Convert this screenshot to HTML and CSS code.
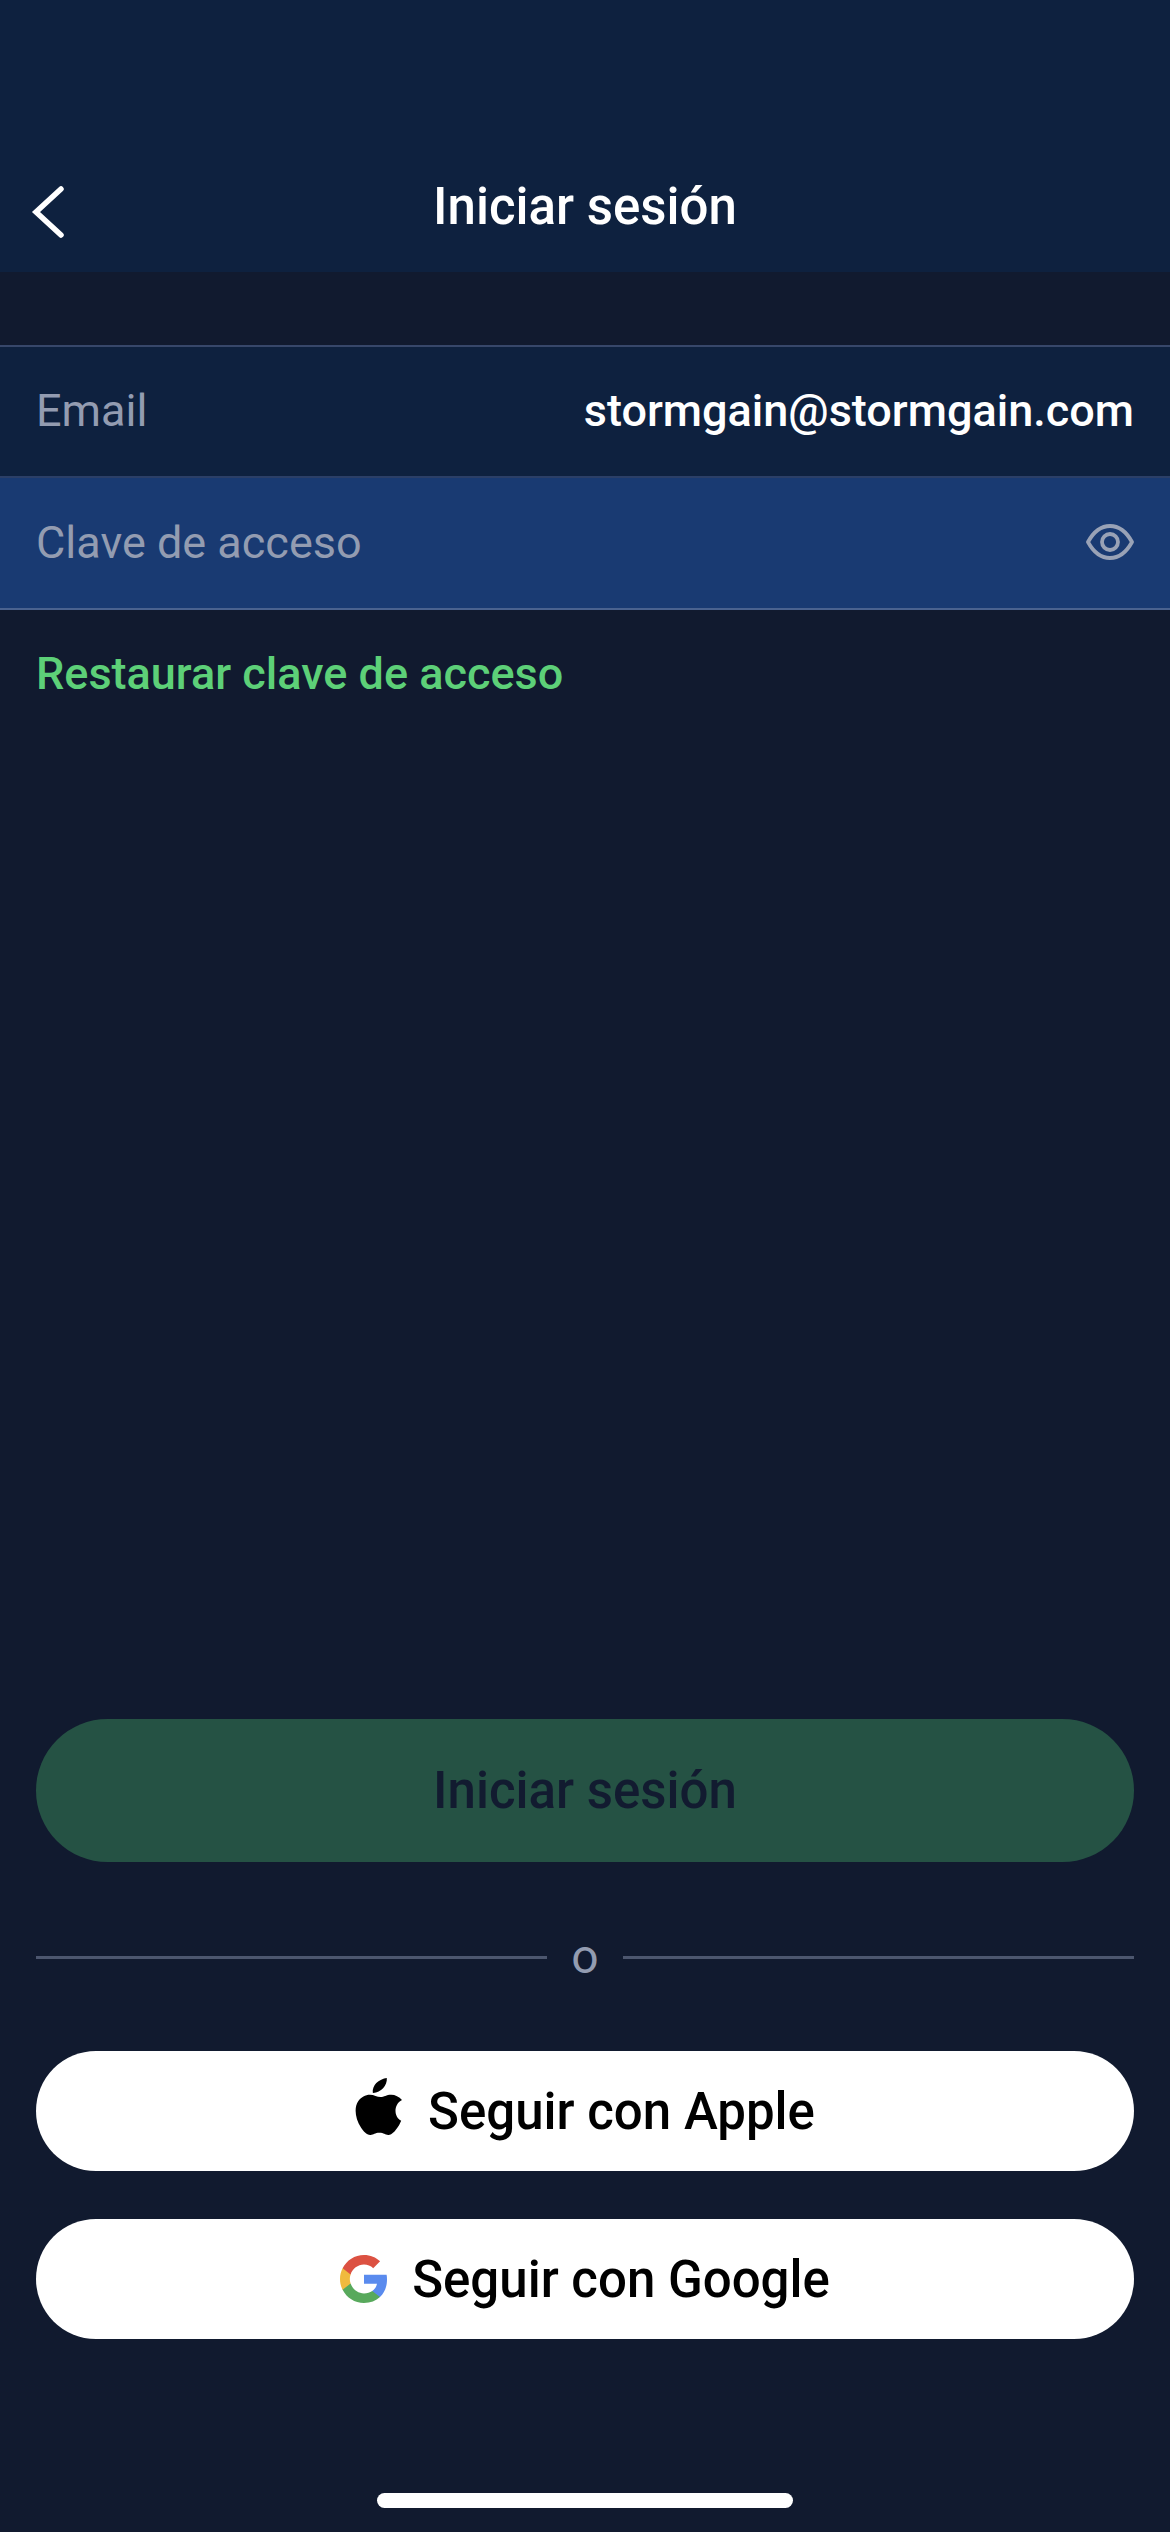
FILE: index.html
```html
<!DOCTYPE html>
<html lang="es">
<head>
    <meta charset="UTF-8">
    <meta name="viewport" content="width=device-width, initial-scale=1.0">
    <title>Iniciar sesión</title>
    <link rel="stylesheet" href="styles.css">
</head>
<body>

    <header class="topbar">
        <svg class="back" width="36" height="52" viewBox="0 0 36 52">
            <path d="M31 3 L6 26 L31 49" fill="none" stroke="#fff" stroke-width="5.5" stroke-linecap="round" stroke-linejoin="miter"/>
        </svg>
        <h1>Iniciar sesión</h1>
    </header>

    <div class="fields">
        <div class="field">
            <span class="label">Email</span>
            <span class="value">stormgain@stormgain.com</span>
        </div>
        <div class="field active">
            <span class="label">Clave de acceso</span>
            <svg class="eye" width="48" height="36" viewBox="0 0 48 36">
                <path d="M2 18 C8 7 15 2 24 2 C33 2 40 7 46 18 C40 29 33 34 24 34 C15 34 8 29 2 18 Z" fill="none" stroke="#99a2b6" stroke-width="3.8" stroke-linejoin="round"/>
                <circle cx="24" cy="18" r="8" fill="none" stroke="#99a2b6" stroke-width="3.8"/>
            </svg>
        </div>
    </div>

    <a class="restore">Restaurar clave de acceso</a>

    <div class="actions">
        <button class="btn-login">Iniciar sesión</button>

        <div class="divider"><span>o</span></div>

        <button class="btn-social btn-apple">
            <svg class="apple-logo" width="47" height="57" viewBox="5.500 1 41.500 52.500" preserveAspectRatio="none">
                <path d="M33.600 1 C33.900 4.500 32.500 8 30.300 10.400 C28 13 24.500 14.900 21.200 14.700 C20.700 11.400 22.300 8 24.300 5.700 C26.600 3.200 30.500 1.300 33.600 1 Z" fill="#000"/>
                <path d="M46.300 40.400 C45.200 43 44.600 44.200 43.200 46.400 C41.200 49.500 38.400 53.400 35 53.400 C32 53.500 31.200 51.500 27 51.500 C22.900 51.600 22 53.500 19 53.400 C15.500 53.400 12.900 49.900 10.900 46.800 C5.300 38.100 4.700 27.900 8.300 22.500 C10.800 18.600 14.800 16.400 18.600 16.400 C22.400 16.400 24.900 18.500 28.100 18.500 C31.200 18.500 33.100 16.400 37.500 16.400 C40.900 16.400 44.500 18.200 47 21.300 C38.800 25.800 40.100 37.500 46.300 40.400 Z" fill="#000"/>
            </svg>
            <span>Seguir con Apple</span>
        </button>

        <button class="btn-social btn-google">
            <svg width="48" height="48" viewBox="0 0 48 48">
                <path fill="#5a8bee" d="M47 24.500 C47 22.900 46.900 21.300 46.600 19.800 H24 V28.800 H37 C36.400 31.800 34.700 34.300 32.200 36 V42 H40 C44.500 37.800 47 31.700 47 24.500 Z"/>
                <path fill="#58a95c" d="M24 48 C30.500 48 35.900 45.900 40 42 L32.200 36 C30 37.500 27.200 38.400 24 38.400 C17.800 38.400 12.500 34.200 10.600 28.500 H2.600 V34.700 C6.600 42.600 14.700 48 24 48 Z"/>
                <path fill="#f0ba3e" d="M10.600 28.500 C10.100 27 9.800 25.500 9.800 24 C9.800 22.500 10.100 21 10.600 19.500 V13.300 H2.600 C1 16.500 0 20.100 0 24 C0 27.900 1 31.500 2.600 34.700 Z"/>
                <path fill="#dc5142" d="M24 9.600 C27.500 9.600 30.700 10.800 33.200 13.200 L40.100 6.300 C35.900 2.400 30.500 0 24 0 C14.700 0 6.600 5.400 2.600 13.300 L10.600 19.500 C12.500 13.800 17.800 9.600 24 9.600 Z"/>
            </svg>
            <span>Seguir con Google</span>
        </button>
    </div>

    <div class="home-bar"></div>

</body>
</html>
```

FILE: styles.css
```css
* {
    box-sizing: border-box;
}
html, body {
    margin: 0;
    padding: 0;
}
body {
    width: 1170px;
    height: 2532px;
    background-color: #111a2f;
    font-family: Roboto, "Noto Sans", sans-serif;
    display: flex;
    flex-direction: column;
    overflow: hidden;
}

/* Header */
.topbar {
    height: 272px;
    background-color: #0e213f;
    padding: 179px 36px 0 36px;
    position: relative;
    text-align: center;
}
.topbar h1 {
    margin: 0;
    font-size: 51px;
    line-height: 56px;
    font-weight: 500;
    color: #fff;
}
.back {
    position: absolute;
    left: 30px;
    top: 186px;
}

/* Fields */
.fields {
    margin-top: 73px;
    border-top: 2px solid #37476a;
}
.field {
    height: 129px;
    padding: 0 36px 2px;
    display: flex;
    align-items: center;
    justify-content: space-between;
    background-color: #0e213f;
    font-size: 45px;
}
.field.active {
    height: 134px;
    background-color: #193a72;
    border-top: 2px solid #2b3f67;
    border-bottom: 2px solid #4a628f;
}
.label {
    color: #939cb1;
}
.value {
    color: #fff;
    font-weight: 500;
}

.restore {
    margin: 38px 36px 0;
    font-size: 45px;
    line-height: 52px;
    font-weight: 500;
    color: #5dd078;
}

/* Bottom buttons */
.actions {
    margin-top: auto;
    padding: 0 36px;
    display: flex;
    flex-direction: column;
}
button {
    border: none;
    width: 100%;
    font-family: inherit;
    font-weight: 500;
    cursor: pointer;
}
.btn-login {
    height: 143px;
    border-radius: 72px;
    background-color: #255244;
    color: #121b30;
    font-size: 51px;
}
.divider {
    display: flex;
    align-items: center;
    gap: 24px;
    margin: 71px 0 70px;
    height: 48px;
    color: #939cb1;
    font-size: 48px;
    line-height: 48px;
}
.divider::before, .divider::after {
    content: "";
    flex: 1;
    height: 3px;
    background-color: #4c566e;
}
.btn-social {
    height: 120px;
    border-radius: 60px;
    background-color: #fff;
    color: #000;
    font-size: 51px;
    display: flex;
    align-items: center;
    justify-content: center;
    gap: 24px;
}
.btn-apple {
    gap: 26px;
}
.apple-logo {
    margin-bottom: 10px;
}
.btn-google {
    margin-top: 48px;
}

.home-bar {
    width: 416px;
    height: 15px;
    border-radius: 8px;
    background-color: #fff;
    margin: 154px 0 24px 377px;
}
```
